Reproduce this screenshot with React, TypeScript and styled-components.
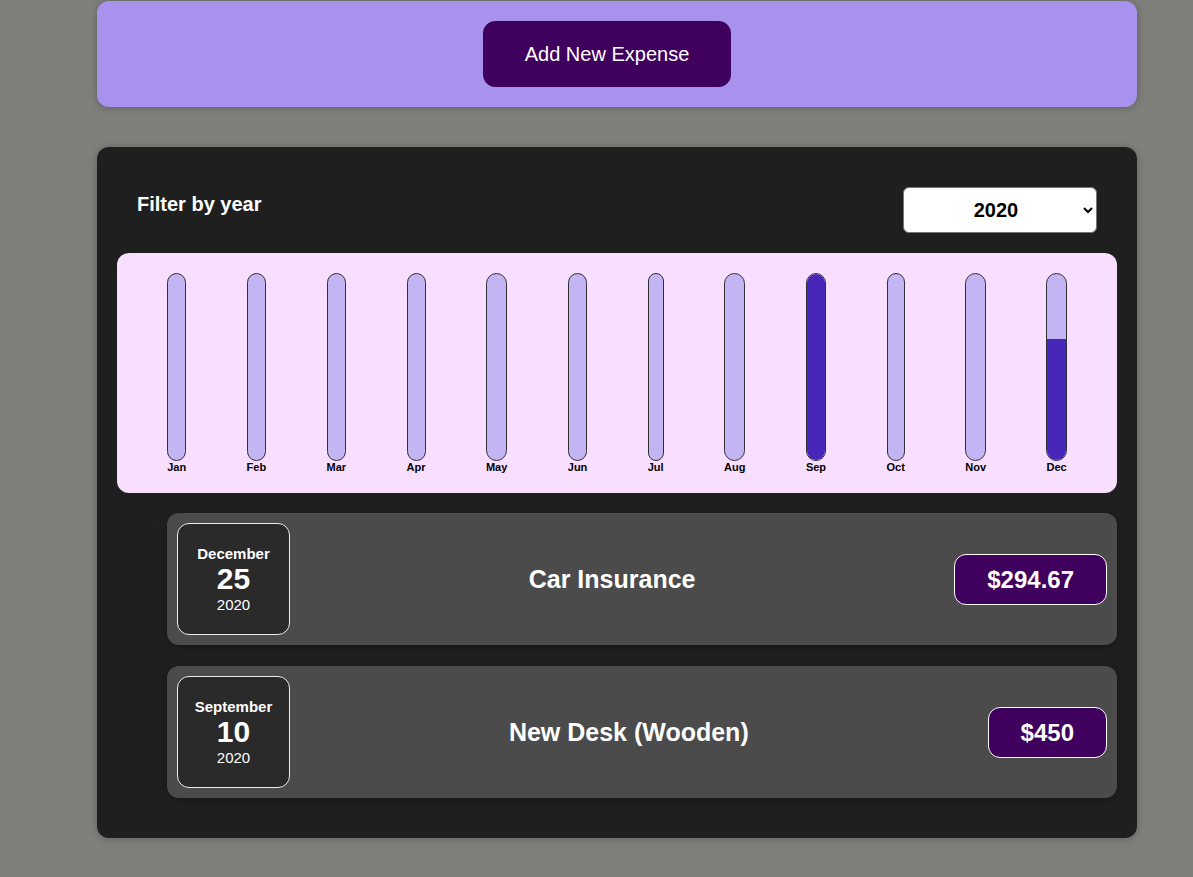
import React from "react";
import styled, { createGlobalStyle } from "styled-components";

const GlobalStyle = createGlobalStyle`
  html, body {
    margin: 0;
    background: #7f7f7b;
    font-family: "Liberation Sans", Arial, sans-serif;
  }
  * { box-sizing: border-box; }
`;

const Page = styled.div`
  width: 1040px;
  margin-left: 97px;
  padding: 1px 0 40px;
`;

const NewExpenseCard = styled.div`
  background: #a892ee;
  padding: 20px;
  border-radius: 12px;
  text-align: center;
  box-shadow: 0 1px 8px rgba(0, 0, 0, 0.25);
`;

const AddButton = styled.button`
  font-family: "Liberation Sans", Arial, sans-serif;
  font-size: 20px;
  line-height: 22px;
  padding: 21px 41px;
  margin-right: 20px;
  background: #40005d;
  color: #fff;
  border: 1px solid #40005d;
  border-radius: 12px;
  cursor: pointer;
`;

const ExpensesCard = styled.div`
  margin-top: 40px;
  background: #1f1f1f;
  padding: 20px;
  border-radius: 12px;
  box-shadow: 0 1px 8px rgba(0, 0, 0, 0.25);
`;

const Filter = styled.div`
  color: #fff;
  padding: 0 20px;
`;

const FilterControl = styled.div`
  display: flex;
  align-items: center;
  justify-content: space-between;
  margin: 20px 0;
`;

const FilterLabel = styled.label`
  font-weight: bold;
  font-size: 20px;
  line-height: 23px;
  margin-bottom: 12px;
`;

const YearSelect = styled.select`
  width: 194px;
  height: 46px;
  font-family: "Liberation Sans", Arial, sans-serif;
  font-size: 20px;
  font-weight: bold;
  padding: 0 4px 0 8px;
  text-align: center;
  text-align-last: center;
  border: 1px solid #767676;
  border-radius: 6px;
  background: #fff;
  color: #000;
`;

const Chart = styled.div`
  height: 240px;
  padding: 20px;
  border-radius: 12px;
  background: #f8dfff;
  display: flex;
  justify-content: space-around;
  text-align: center;
`;

const ChartBar = styled.div`
  height: 100%;
  display: flex;
  flex-direction: column;
  align-items: center;
`;

const BarInner = styled.div`
  flex: 1;
  width: 100%;
  border: 1px solid #313131;
  border-radius: 12px;
  background: #c3b4f3;
  overflow: hidden;
  display: flex;
  flex-direction: column;
  justify-content: flex-end;
`;

const BarFill = styled.div`
  background: #4826b9;
  width: 100%;
`;

const BarLabel = styled.div`
  font-weight: bold;
  font-size: 11px;
  line-height: 12px;
  color: #000;
`;

const List = styled.ul`
  list-style: none;
  margin: 20px 0 0 50px;
  padding: 0;
`;

const Item = styled.li`
  display: flex;
  align-items: center;
  justify-content: space-between;
  padding: 10px;
  margin: 0 0 21px;
  border-radius: 12px;
  background: #4b4b4b;
  box-shadow: 0 2px 8px rgba(0, 0, 0, 0.25);
  &:last-child { margin-bottom: 20px; }
`;

const DateBox = styled.div`
  width: 113px;
  height: 112px;
  flex-shrink: 0;
  display: flex;
  flex-direction: column;
  align-items: center;
  justify-content: center;
  border: 1px solid #ececec;
  background: #2a2a2a;
  color: #fff;
  border-radius: 12px;
`;

const DateMonth = styled.div`
  font-size: 15px;
  line-height: 17px;
  font-weight: bold;
`;

const DateDay = styled.div`
  font-size: 30px;
  line-height: 34px;
  font-weight: bold;
`;

const DateYear = styled.div`
  font-size: 15px;
  line-height: 17px;
`;

const Title = styled.h2`
  flex: 1;
  margin: 0 30px 0 10px;
  text-align: center;
  color: #fff;
  font-size: 25px;
  font-weight: bold;
`;

const Price = styled.div`
  font-size: 24px;
  line-height: 27px;
  font-weight: bold;
  color: #fff;
  background: #40005d;
  border: 1px solid #fff;
  padding: 11px 32px;
  border-radius: 12px;
`;

const months = ["Jan", "Feb", "Mar", "Apr", "May", "Jun", "Jul", "Aug", "Sep", "Oct", "Nov", "Dec"];
const fills: Record<string, number> = { Sep: 100, Dec: 65 };

const expenses = [
  { month: "December", day: "25", year: "2020", title: "Car Insurance", amount: "$294.67" },
  { month: "September", day: "10", year: "2020", title: "New Desk (Wooden)", amount: "$450" },
];

export default function App() {
  return (
    <Page>
      <GlobalStyle />
      <NewExpenseCard>
        <AddButton>Add New Expense</AddButton>
      </NewExpenseCard>
      <ExpensesCard>
        <Filter>
          <FilterControl>
            <FilterLabel>Filter by year</FilterLabel>
            <YearSelect defaultValue="2020">
              <option value="2022">2022</option>
              <option value="2021">2021</option>
              <option value="2020">2020</option>
              <option value="2019">2019</option>
            </YearSelect>
          </FilterControl>
        </Filter>
        <Chart>
          {months.map((m) => (
            <ChartBar key={m}>
              <BarInner>
                <BarFill style={{ height: `${fills[m] ?? 0}%` }} />
              </BarInner>
              <BarLabel>{m}</BarLabel>
            </ChartBar>
          ))}
        </Chart>
        <List>
          {expenses.map((e) => (
            <Item key={e.title}>
              <DateBox>
                <DateMonth>{e.month}</DateMonth>
                <DateDay>{e.day}</DateDay>
                <DateYear>{e.year}</DateYear>
              </DateBox>
              <Title>{e.title}</Title>
              <Price>{e.amount}</Price>
            </Item>
          ))}
        </List>
      </ExpensesCard>
    </Page>
  );
}
